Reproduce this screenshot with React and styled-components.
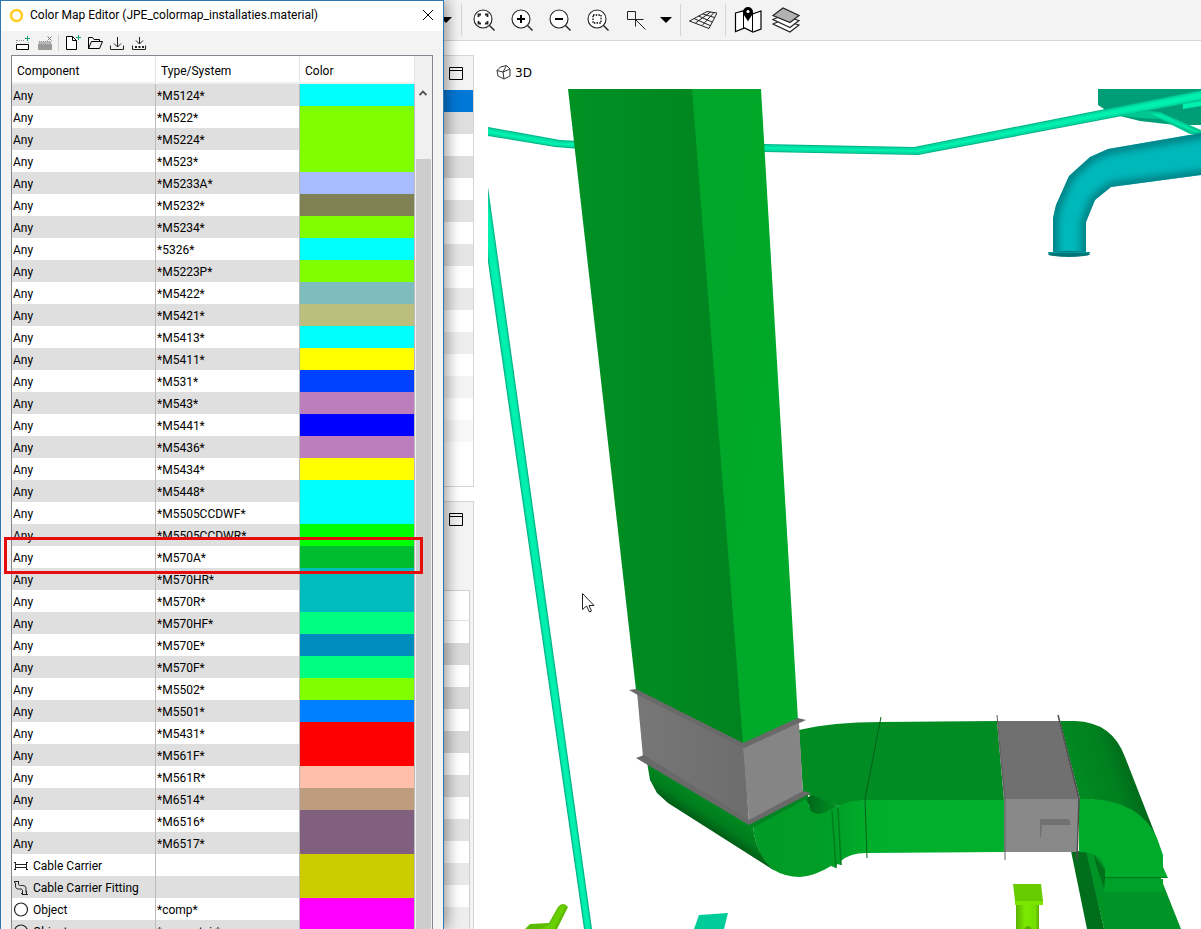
import React from "react";
import styled, { createGlobalStyle } from "styled-components";

const GlobalStyle = createGlobalStyle`
  * {
    box-sizing: border-box;
  }
  body {
    margin: 0;
    background: #ffffff;
    color: #000000;
    font-family: Roboto, "Open Sans", sans-serif;
    font-size: 12px;
  }
  button {
    border: 0;
    padding: 0;
    background: none;
    color: inherit;
    font: inherit;
  }
  svg {
    display: block;
  }
`;

const Desktop = styled.div`
  display: flex;
  height: 100vh;
  overflow: hidden;
`;

/* ---------- dialog ---------- */

const Dialog = styled.section`
  position: relative;
  z-index: 2;
  flex: 0 0 444px;
  display: flex;
  flex-direction: column;
  border: 1px solid #2f78b0;
  border-bottom: 0;
  background: #f3f3f3;
  box-shadow: 2px 0 14px rgba(0, 0, 0, 0.45);
`;

const TitleBar = styled.header`
  display: flex;
  align-items: center;
  flex: 0 0 30px;
  gap: 6px;
  padding: 0 9px 2px 8px;
  background: #ffffff;

  h1 {
    flex: 1;
    margin: 0;
    font-size: 12px;
    font-weight: 400;
    white-space: nowrap;
  }
`;

const DialogTools = styled.div`
  display: flex;
  align-items: center;
  flex: 0 0 24px;
  gap: 6px;
  padding: 0 13px;
`;

const ToolButton = styled.button`
  width: 16px;
  height: 16px;
`;

const ToolDivider = styled.span`
  width: 1px;
  height: 16px;
  background: #d0d0d0;
`;

const TableBox = styled.div`
  display: flex;
  flex: 1;
  min-height: 0;
  margin: 0 10px;
  border: 1px solid #828790;
  border-bottom: 0;
  background: #ffffff;
  overflow: hidden;
`;

const Table = styled.table`
  flex: 1;
  align-self: flex-start;
  table-layout: fixed;
  border-collapse: separate;
  border-spacing: 0;

  th {
    height: 28px;
    padding: 3px 5px 0;
    border-right: 1px solid #e5e5e5;
    border-bottom: 2px solid #f0f0f0;
    font-weight: 400;
    text-align: left;
  }
`;

const Row = styled.tr`
  height: 22px;
  background: ${(props) => (props.$shaded ? "#dfdfdf" : "#ffffff")};
`;

const Cell = styled.td`
  height: 22px;
  padding: 2px 1px 0;
  border-right: 1px solid #bcbcbc;
  line-height: 20px;
  white-space: nowrap;
  background: ${(props) => props.$color || "transparent"};
`;

const Component = styled.span`
  display: flex;
  align-items: center;
  gap: 4px;
  height: 20px;
`;

const ScrollBar = styled.div`
  display: flex;
  flex-direction: column;
  flex: 0 0 17px;
  padding: 28px 1px 0 0;
  background: #f0f0f0;
`;

const ScrollUp = styled.button`
  display: flex;
  justify-content: center;
  align-items: center;
  height: 17px;
`;

const ScrollThumb = styled.div`
  flex: 1;
  margin: 58px 0 0 1px;
  background: #cdcdcd;
`;

const Highlight = styled.div`
  position: absolute;
  top: 536px;
  left: 3px;
  width: 419px;
  height: 37px;
  border: 3px solid #e60d0d;
`;

/* ---------- main window ---------- */

const MainWindow = styled.main`
  display: flex;
  flex-direction: column;
  flex: 1;
  min-width: 0;
`;

const Toolbar = styled.div`
  display: flex;
  align-items: center;
  flex: 0 0 41px;
  border-bottom: 1px solid #d5d5d5;
  background: #f3f3f3;
`;

const IconButton = styled.button`
  display: flex;
  justify-content: center;
  align-items: center;
  width: ${(props) => props.$width || 38}px;
  height: 40px;
`;

const Divider = styled.span`
  width: 1px;
  height: 32px;
  margin: 0 3px;
  background: #d5d5d5;
`;

const Workspace = styled.div`
  display: flex;
  flex: 1;
  gap: 14px;
  min-height: 0;
  padding-top: 14px;
`;

const SidePanels = styled.aside`
  display: flex;
  flex-direction: column;
  flex: 0 0 30px;
  gap: 14px;
`;

const Panel = styled.div`
  display: flex;
  flex-direction: column;
  flex: ${(props) => (props.$fill ? "1" : "0 0 432px")};
  min-height: 0;
  border: 1px solid #d5d5d5;
  border-width: ${(props) => (props.$fill ? "1px 1px 0 0" : "1px 1px 1px 0")};
  background: ${(props) => (props.$fill ? "#f3f3f3" : "#ffffff")};
  overflow: hidden;
`;

const PanelHeader = styled.div`
  display: flex;
  align-items: center;
  flex: 0 0 34px;
  padding-left: 5px;
  background: #f3f3f3;
`;

const PanelList = styled.div`
  flex: 1;
  margin: ${(props) => (props.$inset ? "54px 3px 0 0" : "0")};
  border: solid #cfcfcf;
  border-width: ${(props) => (props.$inset ? "1px 1px 0 0" : "0")};
  background: #ffffff;
`;

const PanelListHeader = styled.div`
  height: 30px;
  border-bottom: 1px solid #e2e2e2;
`;

const PanelRow = styled.div`
  height: 22px;
  background: ${(props) => props.$color};
`;

const Viewer = styled.section`
  display: flex;
  flex-direction: column;
  flex: 1;
  min-width: 0;
`;

const ViewTab = styled.button`
  display: flex;
  align-items: center;
  align-self: flex-start;
  flex: 0 0 34px;
  gap: 4px;
  padding: 1px 8px 0;
  font-family: "DejaVu Sans", sans-serif;
`;

const Canvas = styled.svg`
  flex: 1;
  width: 100%;
  min-height: 0;
`;

const rows = [
  ["Any", "*M5124*", "#00ffff"],
  ["Any", "*M522*", "#80ff00"],
  ["Any", "*M5224*", "#80ff00"],
  ["Any", "*M523*", "#80ff00"],
  ["Any", "*M5233A*", "#a8bdff"],
  ["Any", "*M5232*", "#808055"],
  ["Any", "*M5234*", "#80ff00"],
  ["Any", "*5326*", "#00ffff"],
  ["Any", "*M5223P*", "#80ff00"],
  ["Any", "*M5422*", "#7ebcbe"],
  ["Any", "*M5421*", "#bcbe7e"],
  ["Any", "*M5413*", "#00ffff"],
  ["Any", "*M5411*", "#ffff00"],
  ["Any", "*M531*", "#0040ff"],
  ["Any", "*M543*", "#bd7ebd"],
  ["Any", "*M5441*", "#0000ff"],
  ["Any", "*M5436*", "#bd7ebd"],
  ["Any", "*M5434*", "#ffff00"],
  ["Any", "*M5448*", "#00ffff"],
  ["Any", "*M5505CCDWF*", "#00ffff"],
  ["Any", "*M5505CCDWR*", "#00ff00"],
  ["Any", "*M570A*", "#00bd2f"],
  ["Any", "*M570HR*", "#00bdbd"],
  ["Any", "*M570R*", "#00bdbd"],
  ["Any", "*M570HF*", "#00ff80"],
  ["Any", "*M570E*", "#008dbd"],
  ["Any", "*M570F*", "#00ff80"],
  ["Any", "*M5502*", "#80ff00"],
  ["Any", "*M5501*", "#0080ff"],
  ["Any", "*M5431*", "#ff0000"],
  ["Any", "*M561F*", "#ff0000"],
  ["Any", "*M561R*", "#ffbfaa"],
  ["Any", "*M6514*", "#bd9d7e"],
  ["Any", "*M6516*", "#81607f"],
  ["Any", "*M6517*", "#81607f"],
  ["Cable Carrier", "", "#cccc00", "carrier"],
  ["Cable Carrier Fitting", "", "#cccc00", "fitting"],
  ["Object", "*comp*", "#ff00ff", "object"],
  ["Object", "*comentaj.*", "#ff00ff", "object"],
];

const upperRows = [
  "#0078d7", "#dedede", "#ffffff", "#dedede", "#ffffff", "#e2e2e2",
  "#ffffff", "#e5e5e5", "#ffffff", "#e9e9e9", "#ffffff", "#eeeeee",
  "#ffffff", "#f3f3f3", "#ffffff", "#f8f8f8", "#ffffff", "#ffffff",
];

const lowerRows = [
  "#ffffff", "#dadada", "#ffffff", "#dadada", "#ffffff", "#dadada",
  "#ffffff", "#dedede", "#ffffff", "#e2e2e2", "#ffffff", "#e9e9e9",
  "#ffffff", "#eeeeee",
];

const RowIcon = ({ kind }) => (
  <svg width="16" height="16" viewBox="0 0 16 16" fill="none" stroke="#222">
    {kind === "carrier" && (
      <path d="M1 4.5h2M1 11.5h2M2.5 4.500v7M13 4.5h2M13 11.500h2M13.500 4.500v7M2.500 6.500h11M2.500 9.500h11" />
    )}
    {kind === "fitting" && (
      <path d="M1 1.500h5M1.500 1v1.500l1.500 1M5.500 1v2.500M2.500 3v3c0 2 1 3 3 3h2.500c1 0 1.500 1 1.500 2v3M5.500 3c0 2 0 2.500 2 2.500h2c2.500 0 3.500 1 3.500 3v4M8 13.500h2M9.500 12v3M13.500 11v3.500M9.500 14.500h5.500" />
    )}
    {kind === "object" && <circle cx="8" cy="7.500" r="6.500" strokeWidth="1.200" />}
  </svg>
);

const WindowIcon = () => (
  <svg width="14" height="14" viewBox="0 0 14 14" fill="none" stroke="#000">
    <path d="M.5 1.500h13v12H.5zM.5 4.500h13" />
  </svg>
);

const Caret = () => (
  <svg width="12" height="6" viewBox="0 0 12 6">
    <path d="M0 0h12L6 6z" />
  </svg>
);

const Magnifier = ({ children }) => (
  <svg width="24" height="24" viewBox="0 0 24 24" fill="none" stroke="#222" strokeWidth="1.100">
    <circle cx="11" cy="11" r="9" fill="#fff" />
    <path d="M17.500 17.500l5 5" strokeWidth="1.400" />
    {children}
  </svg>
);

const Scene = () => (
  <Canvas
    viewBox="488 89 713 840"
    preserveAspectRatio="xMinYMin slice"
    role="img"
    aria-label="3D model"
  >
    <defs>
      <linearGradient id="ductDark" x1="0" x2="1">
        <stop offset="0" stopColor="#009123" />
        <stop offset="1" stopColor="#00831f" />
      </linearGradient>
      <linearGradient id="ductLight" x1="0" x2="1" y1="0" y2="1">
        <stop offset="0" stopColor="#00a629" />
        <stop offset="1" stopColor="#00aa2a" />
      </linearGradient>
      <linearGradient id="front" gradientUnits="userSpaceOnUse" x1="770" y1="0" x2="900" y2="0">
        <stop offset="0" stopColor="#009b26" />
        <stop offset="0.5" stopColor="#009f27" />
        <stop offset="0.75" stopColor="#00ad2b" />
        <stop offset="1" stopColor="#00b02c" />
      </linearGradient>
      <linearGradient id="under" gradientUnits="userSpaceOnUse" x1="715" y1="800" x2="697" y2="828">
        <stop offset="0" stopColor="#008b21" />
        <stop offset="0.500" stopColor="#007d1e" />
        <stop offset="1" stopColor="#004d12" />
      </linearGradient>
      <linearGradient id="elbow" gradientUnits="userSpaceOnUse" x1="1070" y1="790" x2="1145" y2="764">
        <stop offset="0" stopColor="#008c22" />
        <stop offset="0.550" stopColor="#00801f" />
        <stop offset="1" stopColor="#005c16" />
      </linearGradient>
      <linearGradient id="notch" x1="0" x2="1">
        <stop offset="0" stopColor="#00661a" />
        <stop offset="1" stopColor="#009024" />
      </linearGradient>
      <linearGradient id="greyFace" x1="0" x2="1">
        <stop offset="0" stopColor="#777777" />
        <stop offset="1" stopColor="#6d6d6d" />
      </linearGradient>
      <linearGradient id="limePost" x1="0" x2="1">
        <stop offset="0" stopColor="#5bb300" />
        <stop offset="0.400" stopColor="#7bea00" />
        <stop offset="0.850" stopColor="#74de00" />
        <stop offset="1" stopColor="#58ad00" />
      </linearGradient>
      <filter id="soft" x="-20%" y="-20%" width="140%" height="140%">
        <feGaussianBlur stdDeviation="4" />
      </filter>
      <clipPath id="bend">
        <path d="M1201 133L1108 149 1090 157 1069 176 1056 205 1053 218V253H1086V222L1095 200 1111 187 1201 175z" />
      </clipPath>
    </defs>

    {/* thin pipes */}
    <path d="M488 187L592 929H584L488 262z" fill="#00b386" />
    <path d="M488 194L591 929H585L488 255z" fill="#00dca2" />
    <path d="M488 204L590 929H586L488 246z" fill="#00f0b0" />
    <path d="M488 127L560 140 580 141V149L555 147 488 136z" fill="#00b386" />
    <path d="M488 128L560 141 580 142V148L555 146 488 135z" fill="#00dca2" />
    <path d="M488 130L560 143H580V146L555 145 488 133z" fill="#00f0b0" />
    <path d="M1098 89H1201V125H1175L1140 121 1120 116 1104 109 1098 105z" fill="#009e76" />
    <path d="M764 144L914 147 1201 90V101L918 155 764 152z" fill="#00b386" />
    <path d="M764 145L914 148 1201 91V100L918 154 764 151z" fill="#00dca2" />
    <path d="M764 147L915 150 1201 93V98L918 152 764 149z" fill="#00f0b0" />
    <path d="M1118 115L1148 111 1160 112 1201 130V134H1190L1160 119 1140 118z" fill="#00c792" />
    <path d="M1150 113L1162 114 1199 132H1194L1158 117z" fill="#00e5a8" />
    <path d="M1183 104L1201 101V106L1183 109z" fill="#00f0b0" />

    {/* blue bend */}
    <g clipPath="url(#bend)">
      <path d="M1040 120H1201V260H1040z" fill="#00b8ba" />
      <path
        d="M1210 132L1108 149 1090 157 1069 176 1056 205 1053 218V260M1086 260V222L1095 200 1111 187 1210 174"
        fill="none"
        stroke="#006f74"
        strokeWidth="8"
        filter="url(#soft)"
      />
    </g>
    <ellipse cx="1069" cy="254" rx="21" ry="3" fill="#007679" />
    <path d="M1048 252H1090V253H1048z" fill="#009a9c" />

    {/* descending duct on the right */}
    <path d="M1071 851H1087L1104 929H1087z" fill="#006e1b" />
    <path d="M1086 851H1150L1181 929H1104z" fill="#009426" />
    <path d="M1094 855L1105 870V891L1097 868z" fill="#00701b" />

    {/* horizontal duct */}
    <path d="M799 730Q832 722 881 722L997 721 1004 800H866L838 806 803 793z" fill="#008c22" />
    <path
      d="M749 822L806 794 809 806Q816 816 826 811L838 806Q850 800 866 800H1004V852L866 853Q850 853 841 861V865L837 864 836 868 831 866Q815 876 800 877 785 877 772 869 755 854 753 825z"
      fill="url(#front)"
    />
    <path d="M806 798L812 795 838 806 828 811Q818 817 811 811z" fill="url(#notch)" />
    <path d="M832 811L836 868M838 808L841 865" stroke="#007d1e" strokeWidth="1.500" />
    <path d="M881 717L865 799 867 858" fill="none" stroke="#006118" />
    <path d="M647 762L650 780 657 793 668 803 775 871Q755 855 753 825z" fill="url(#under)" />
    <path d="M750 824L808 793 808 798 754 827z" fill="#008522" />

    {/* vertical duct */}
    <path d="M568 89H693L744 744 636 690z" fill="url(#ductDark)" />
    <path d="M692 89H761L798 720 743 744z" fill="url(#ductLight)" />
    <path d="M637 692L744 746 749 823 643 757z" fill="url(#greyFace)" />
    <path d="M743 746L799 723 803 793 749 822z" fill="#858585" />
    <path d="M629 690L636 689 743 743 798 718 806 720 744 748 636 694z" fill="#696969" />
    <path d="M636 758L644 755 749 820 803 791 811 793 749 825z" fill="#696969" />

    {/* damper and right elbow */}
    <path d="M1060 721H1075Q1112 722 1125 757L1157 839Q1135 799 1080 799z" fill="url(#elbow)" />
    <path
      d="M1079 799H1090Q1140 801 1157 838L1163 855V867L1168 878H1105V869Q1102 852 1079 852z"
      fill="#00aa2a"
    />
    <path d="M1105 879H1163V892H1104z" fill="#00a128" />
    <path d="M1105 877.500H1167" stroke="#007d1e" />
    <path d="M997 721H1059L1080 800H1004z" fill="#707070" />
    <path d="M1004 799H1079L1077 852H1004z" fill="#898989" />
    <path d="M1040 819H1069L1071 825H1042L1041 837 1040 838z" fill="#717171" />
    <path d="M997 715L1005 799V860" fill="none" stroke="#606060" />
    <path d="M1058 715L1079 798 1077 860" fill="none" stroke="#4d4d4d" strokeWidth="1.500" />

    {/* fittings at the lower edge */}
    <path d="M1013 884H1041L1043 901H1015z" fill="#66cc00" />
    <path d="M1015 901H1043V905H1015z" fill="#7ae600" />
    <path d="M1016 905H1039V929H1016z" fill="url(#limePost)" />
    <path d="M1024 929Q1028 923 1032 929z" fill="#58ad00" />
    <path d="M699 915L728 913 724 929H694z" fill="#00cc99" />
    <path d="M525 929L530 924 549 923 558 907Q563 901 568 907L557 929z" fill="#5cba00" />
    <path d="M550 924L560 906 566 906 554 929H540z" fill="#68d000" />

    <path
      d="M582.500 593.500V609.500L586.500 606 589.500 612 591.500 611 589 605.500H594z"
      fill="#fff"
      stroke="#222"
    />
  </Canvas>
);

const App = () => {
  return (
    <>
      <GlobalStyle />
      <Desktop>
        <Dialog>
          <TitleBar>
            <svg width="15" height="15" viewBox="0 0 15 15" fill="none">
              <circle cx="7.500" cy="7.500" r="5.500" stroke="#ffcc22" strokeWidth="2.500" />
            </svg>
            <h1>Color Map Editor (JPE_colormap_installaties.material)</h1>
            <button aria-label="Close">
              <svg width="12" height="12" viewBox="0 0 12 12" stroke="#000">
                <path d="M1 1l10 10M11 1L1 11" />
              </svg>
            </button>
          </TitleBar>
          <DialogTools>
            <ToolButton aria-label="Add row">
              <svg width="16" height="16" viewBox="0 0 16 16" fill="none" stroke="#000">
                <path d="M2.500 9.500h12v5h-12z" fill="#fff" />
                <path d="M2.500 5v4M3 5.500h7M14.500 7v2" stroke="#999" strokeDasharray="1 1" />
                <path d="M11 3.500h5M13.500 1v5" stroke="#14a669" />
              </svg>
            </ToolButton>
            <ToolButton aria-label="Delete row">
              <svg width="16" height="16" viewBox="0 0 16 16" fill="none" stroke="#999">
                <path d="M2.500 9.500h13v5h-13z" fill="#999" />
                <path d="M3 6.500h12v3H3z" fill="#b5b5b5" strokeDasharray="1 1" />
                <path d="M11.500 1.500l4 4M15.500 1.500l-4 4" stroke="#777" />
              </svg>
            </ToolButton>
            <ToolDivider />
            <ToolButton aria-label="New">
              <svg width="16" height="16" viewBox="0 0 16 16" fill="none" stroke="#000">
                <path d="M1.500 1.500h6l4 4v9h-10z" fill="#fff" />
                <path d="M7.500 1.500v4h4" />
                <path d="M11 2.500h5M13.500 0v5" stroke="#14a669" />
              </svg>
            </ToolButton>
            <ToolButton aria-label="Open">
              <svg width="16" height="16" viewBox="0 0 16 16" fill="none" stroke="#000">
                <path d="M1.500 13.500v-11h4l1.500 2h5.500v2M1.500 13.500l3-7h11l-3 7z" />
              </svg>
            </ToolButton>
            <ToolButton aria-label="Save">
              <svg width="16" height="16" viewBox="0 0 16 16" fill="none" stroke="#222">
                <path d="M8.500 2v10M5 8.500l3.500 3.500L12 8.500M1.500 10.500v4h13v-4" />
              </svg>
            </ToolButton>
            <ToolButton aria-label="Save as">
              <svg width="16" height="16" viewBox="0 0 16 16" fill="none" stroke="#222">
                <path d="M8.500 2v7M5 5.500L8.500 9 12 5.500M1.500 10.500v4h13v-4" />
                <path d="M4 12h9" strokeWidth="2" strokeDasharray="2 1.500" />
              </svg>
            </ToolButton>
          </DialogTools>
          <TableBox>
            <Table>
              <colgroup>
                <col style={{ width: 144 }} />
                <col style={{ width: 144 }} />
                <col />
              </colgroup>
              <thead>
                <tr>
                  <th>Component</th>
                  <th>Type/System</th>
                  <th>Color</th>
                </tr>
              </thead>
              <tbody>
                {rows.map(([component, type, color, icon], i) => (
                  <Row key={i} $shaded={i % 2 === 0}>
                    <Cell>
                      <Component>
                        {icon && <RowIcon kind={icon} />}
                        {component}
                      </Component>
                    </Cell>
                    <Cell>{type}</Cell>
                    <Cell $color={color} />
                  </Row>
                ))}
              </tbody>
            </Table>
            <ScrollBar>
              <ScrollUp aria-label="Scroll up">
                <svg width="8" height="6" viewBox="0 0 8 6" fill="none" stroke="#505050" strokeWidth="1.800">
                  <path d="M.5 5L4 1.500 7.500 5" />
                </svg>
              </ScrollUp>
              <ScrollThumb />
            </ScrollBar>
          </TableBox>
          <Highlight />
        </Dialog>

        <MainWindow>
          <Toolbar>
            <IconButton $width={14} aria-label="More">
              <svg width="14" height="6" viewBox="0 0 14 6">
                <path d="M0 0h8L2 6 0 4z" />
              </svg>
            </IconButton>
            <Divider />
            <IconButton aria-label="Zoom to fit">
              <Magnifier>
                <path d="M6.500 9V6.500H9M13 6.500h2.500V9M15.500 13v2.500H13M9 15.500H6.500V13" strokeWidth="1.800" />
              </Magnifier>
            </IconButton>
            <IconButton aria-label="Zoom in">
              <Magnifier>
                <path d="M7 11h8M11 7v8" stroke="#000" strokeWidth="2" />
              </Magnifier>
            </IconButton>
            <IconButton aria-label="Zoom out">
              <Magnifier>
                <path d="M7 11h8" stroke="#000" strokeWidth="2" />
              </Magnifier>
            </IconButton>
            <IconButton aria-label="Zoom to selection">
              <Magnifier>
                <path d="M7 7h8v8H7z" stroke="#000" strokeDasharray="1.500 1.200" strokeWidth="1.300" />
              </Magnifier>
            </IconButton>
            <IconButton aria-label="Snap">
              <svg width="20" height="20" viewBox="0 0 20 20" fill="none" stroke="#222">
                <path d="M1.500 1.500h8v8h-8zM9.500 9.500v7M9.500 9.500h8M9.500 9.500l10 10" />
              </svg>
            </IconButton>
            <IconButton $width={22} aria-label="Snap options">
              <Caret />
            </IconButton>
            <Divider />
            <IconButton aria-label="Work plane">
              <svg width="28" height="20" viewBox="0 0 28 20" fill="none" stroke="#222">
                <path d="M0.500 11L18 1.500 28 3 20 18.500zM5 8.500l16 7M9.500 6l13.500 6M14 4l11.500 3.500M6.500 13L21.500 2M13 15.500L25 2.500" />
              </svg>
            </IconButton>
            <Divider />
            <IconButton aria-label="Map">
              <svg width="28" height="28" viewBox="0 0 28 28" fill="none" stroke="#000">
                <path
                  d="M1.500 7L9 5l9 3 9-3v18l-8 3-8.500-4-9 3.500z"
                  fill="#fff"
                  strokeWidth="1.200"
                />
                <path d="M9.500 6v16M18.500 8v17" />
                <path
                  d="M14 1a5 5 0 0 0-5 5c0 3 3.500 6 5 9.500C15.500 12 19 9 19 6a5 5 0 0 0-5-5z"
                  fill="#000"
                  stroke="none"
                />
                <circle cx="14" cy="5.500" r="1.600" fill="#fff" stroke="none" />
              </svg>
            </IconButton>
            <IconButton aria-label="Layers">
              <svg width="28" height="26" viewBox="0 0 28 26" fill="none" stroke="#222" strokeWidth="1.100">
                <path d="M1 17l9-4 17 5-9 7z" fill="#fff" />
                <path d="M1 12.500l9-4 17 5-9 7z" fill="#fff" />
                <path d="M1 8.500L11 1l16 7.500-9 7z" fill="#b2b2b2" />
              </svg>
            </IconButton>
          </Toolbar>
          <Workspace>
            <SidePanels>
              <Panel>
                <PanelHeader>
                  <button aria-label="Float upper panel">
                    <WindowIcon />
                  </button>
                </PanelHeader>
                <PanelList>
                  {upperRows.map((color, i) => (
                    <PanelRow key={i} $color={color} />
                  ))}
                </PanelList>
              </Panel>
              <Panel $fill>
                <PanelHeader>
                  <button aria-label="Float lower panel">
                    <WindowIcon />
                  </button>
                </PanelHeader>
                <PanelList $inset>
                  <PanelListHeader />
                  {lowerRows.map((color, i) => (
                    <PanelRow key={i} $color={color} />
                  ))}
                </PanelList>
              </Panel>
            </SidePanels>
            <Viewer>
              <ViewTab>
                <svg width="15" height="15" viewBox="0 0 15 15" fill="none" stroke="#333">
                  <path d="M1 5.500L4.500 2l6-1.500L14 4v7l-6 3-6-3zM1 5.500l6 1.500L14 4M7 7l1 7M7 7l3.500-6.500" />
                </svg>
                3D
              </ViewTab>
              <Scene />
            </Viewer>
          </Workspace>
        </MainWindow>
      </Desktop>
    </>
  );
};

export default App;
